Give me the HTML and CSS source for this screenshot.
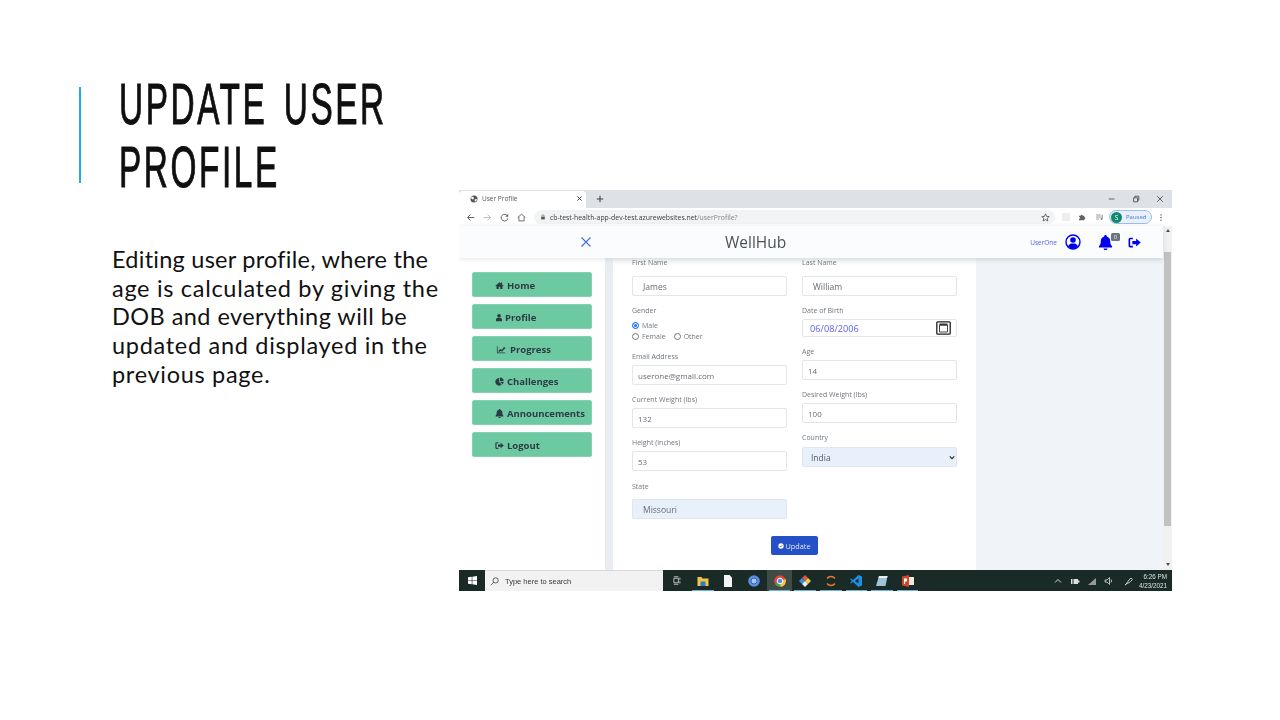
FILE: index.html
```html
<!DOCTYPE html>
<html lang="en">
<head>
<meta charset="utf-8">
<title>Update User Profile</title>
<link rel="stylesheet" href="styles.css">
</head>
<body>
<svg class="defs" width="0" height="0" aria-hidden="true">
  <symbol id="i-home" viewBox="0 0 24 24"><path d="M12 3 1 12.5l1.3 1.5L4 12.6V21h6v-6h4v6h6v-8.4l1.7 1.4 1.3-1.5L19 9V4h-3v2.4z"/></symbol>
  <symbol id="i-user" viewBox="0 0 24 24"><circle cx="12" cy="7" r="5.5"/><path d="M3 23v-4c0-3.500 2.500-6 6-6h6c3.500 0 6 2.500 6 6v4z"/></symbol>
  <symbol id="i-chart" viewBox="0 0 24 24"><path d="M1 3h2v17h20v2H1z"/><path d="m5 16 5-6 4 3 5-6-2-1h6v6l-2-2-6 8-4-3-4 4z"/></symbol>
  <symbol id="i-pie" viewBox="0 0 24 24"><path d="M11 3v10l7 7A10 10 0 1 1 11 3z"/><path d="M13 1a10 10 0 0 1 10 10H13z"/><path d="M14 13h9a10 10 0 0 1-3 6.500z"/></symbol>
  <symbol id="i-bell" viewBox="0 0 24 24"><path d="M12 0a2 2 0 0 0-2 2.300C6.500 3.200 4.500 6 4.500 9.500c0 5-1.500 7-3 8.500v2h21v-2c-1.500-1.500-3-3.500-3-8.500 0-3.500-2-6.300-5.500-7.200A2 2 0 0 0 12 0z"/><path d="M9 21.500h6a3 3 0 0 1-6 0z"/></symbol>
  <symbol id="i-out" viewBox="0 0 24 24"><path d="M9 3H4a3 3 0 0 0-3 3v12a3 3 0 0 0 3 3h5v-3H4V6h5z"/><path d="M15 4.500 23.500 12 15 19.500V15H8V9h7z"/></symbol>
</svg>

<main class="slide">
  <div class="accent"></div>
  <h1 class="title">UPDATE USER<br>PROFILE</h1>
  <p class="body-text"><span class="tight">Editing user profile, where the</span><br>age is calculated by giving the<br><span class="semi">DOB and everything will be</span><br>updated and displayed in the<br>previous page.</p>

  <section class="shot">
    <div class="tabstrip">
      <div class="tab">
        <svg class="globe" viewBox="0 0 16 16"><circle cx="8" cy="8" r="7" fill="#50555a"/><path d="M3 3l4 1 1 3-3 2-3-3zM9 9l4-1 1 2-4 4z" fill="#fff"/></svg>
        <span class="tab-title">User Profile</span>
        <svg class="tab-x" viewBox="0 0 10 10"><path d="M2 2l6 6M8 2l-6 6" stroke="#333" stroke-width="1.400"/></svg>
      </div>
      <svg class="tab-plus" viewBox="0 0 10 10"><path d="M5 1v8M1 5h8" stroke="#444" stroke-width="1.300"/></svg>
      <div class="winctl">
        <svg viewBox="0 0 10 10"><path d="M1 5h7" stroke="#444" stroke-width="1"/></svg>
        <svg viewBox="0 0 10 10"><path d="M2 3.500h5v5H2zM3.500 3.500V1.500h5v5H7" fill="none" stroke="#444" stroke-width="1"/></svg>
        <svg viewBox="0 0 10 10"><path d="M1.500 1.500l7 7M8.500 1.500l-7 7" stroke="#444" stroke-width="1"/></svg>
      </div>
    </div>

    <div class="toolbar">
      <svg class="tb-icon first" viewBox="0 0 12 12"><path d="M11 6H2M6 2 2 6l4 4" fill="none" stroke="#5f6368" stroke-width="1.300"/></svg>
      <svg class="tb-icon" viewBox="0 0 12 12"><path d="M1 6h9M6 2l4 4-4 4" fill="none" stroke="#b9bcc0" stroke-width="1.300"/></svg>
      <svg class="tb-icon" viewBox="0 0 12 12"><path d="M10 4A4.500 4.500 0 1 0 10.500 7" fill="none" stroke="#5f6368" stroke-width="1.300"/><path d="M11 1v4H7z" fill="#5f6368"/></svg>
      <svg class="tb-icon" viewBox="0 0 12 12"><path d="M1 6l5-4.500L11 6M2.500 5v5.500h7V5" fill="none" stroke="#5f6368" stroke-width="1.200"/></svg>
      <div class="omnibox">
        <svg class="lock" viewBox="0 0 10 10"><path d="M2 4.500h6V9H2z" fill="#555"/><path d="M3.300 4.500V3a1.700 1.700 0 0 1 3.400 0v1.500" fill="none" stroke="#555"/></svg>
        <span class="url">cb-test-health-app-dev-test.azurewebsites.net<span class="url-path">/userProfile?</span></span>
        <svg class="star" viewBox="0 0 12 12"><path d="M6 1.200 7.400 4.500l3.600.3-2.700 2.300.8 3.500L6 8.800l-3.100 1.800.8-3.500L1 4.800l3.600-.3z" fill="none" stroke="#444" stroke-width="1"/></svg>
      </div>
      <div class="tb-right">
        <span class="ext-box"></span>
        <svg class="tb-small" viewBox="0 0 12 12"><path d="M1.500 4h2.500a1.500 1.500 0 0 1 3 0h2.500v2.500a1.500 1.500 0 0 1 0 3V11H1.500V8.500a1.500 1.500 0 0 0 0-3z" fill="#5f6368"/></svg>
        <svg class="tb-small queue" viewBox="0 0 12 12"><path d="M1 3h7M1 6h7M1 9h4" stroke="#5f6368" stroke-width="1"/><path d="M10 3v6" stroke="#5f6368" stroke-width="1.200"/><circle cx="8.800" cy="9" r="1.300" fill="#5f6368"/></svg>
        <div class="pill"><span class="avatar">S</span><span class="paused">Paused</span></div>
        <svg class="tb-dots" viewBox="0 0 4 12"><circle cx="2" cy="2.500" r=".9" fill="#444"/><circle cx="2" cy="6" r=".9" fill="#444"/><circle cx="2" cy="9.500" r=".9" fill="#444"/></svg>
      </div>
    </div>

    <div class="viewport">
      <div class="page">
        <header class="navbar">
          <svg class="menu-x" viewBox="0 0 12 12"><path d="M1.500 1.500l9 9M10.500 1.500l-9 9" stroke="#3f6fd9" stroke-width="1.100"/></svg>
          <span class="brand">WellHub</span>
          <span class="username">UserOne</span>
          <svg class="nav-avatar" viewBox="0 0 16 16"><circle cx="8" cy="8" r="7" fill="none" stroke="#0000f0" stroke-width="1.400"/><circle cx="8" cy="6" r="2.800" fill="#0000f0"/><path d="M3 12.500c1-2.500 2.500-3 5-3s4 .5 5 3A7 7 0 0 1 8 15a7 7 0 0 1-5-2.500z" fill="#0000f0"/></svg>
          <div class="bell-wrap">
            <svg class="nav-bell"><use href="#i-bell"/></svg>
            <span class="badge">0</span>
          </div>
          <svg class="nav-out"><use href="#i-out"/></svg>
        </header>
        <div class="content">
          <nav class="sidebar">
            <a class="side-btn"><svg class="side-ic"><use href="#i-home"/></svg>Home</a>
            <a class="side-btn"><svg class="side-ic narrow"><use href="#i-user"/></svg>Profile</a>
            <a class="side-btn"><svg class="side-ic wide"><use href="#i-chart"/></svg>Progress</a>
            <a class="side-btn"><svg class="side-ic"><use href="#i-pie"/></svg>Challenges</a>
            <a class="side-btn"><svg class="side-ic"><use href="#i-bell"/></svg>Announcements</a>
            <a class="side-btn"><svg class="side-ic"><use href="#i-out"/></svg>Logout</a>
          </nav>
          <div class="gutter"></div>
          <div class="card">
            <div class="form-grid">
              <div class="col">
                <div class="field first"><div class="lbl">First Name</div><div class="ctl inset">James</div></div>
                <div class="field">
                  <div class="lbl">Gender</div>
                  <div class="radios">
                    <div class="radio-row"><span class="radio on"></span>Male</div>
                    <div class="radio-row"><span class="radio"></span><span class="radio-txt">Female</span><span class="radio"></span>Other</div>
                  </div>
                </div>
                <div class="field"><div class="lbl">Email Address</div><div class="ctl">userone@gmail.com</div></div>
                <div class="field"><div class="lbl">Current Weight (lbs)</div><div class="ctl">132</div></div>
                <div class="field"><div class="lbl">Height (inches)</div><div class="ctl">53</div></div>
                <div class="field state"><div class="lbl">State</div><div class="ctl inset filled">Missouri</div></div>
              </div>
              <div class="col">
                <div class="field first"><div class="lbl">Last Name</div><div class="ctl inset">William</div></div>
                <div class="field"><div class="lbl">Date of Birth</div>
                  <div class="ctl date"><span class="date-val">06/08/2006</span>
                    <svg class="cal" viewBox="0 0 15 14"><rect x=".8" y=".8" width="13.400" height="12.400" rx="1" fill="#fff" stroke="#222" stroke-width="1.300"/><path d="M3.500 4h8v7h-8z" fill="#fff" stroke="#444"/><path d="M3.500 2.500h8v2h-8z" fill="#333"/></svg>
                  </div>
                </div>
                <div class="field"><div class="lbl">Age</div><div class="ctl">14</div></div>
                <div class="field"><div class="lbl">Desired Weight (lbs)</div><div class="ctl">100</div></div>
                <div class="field country"><div class="lbl">Country</div>
                  <div class="ctl filled select"><span>India</span>
                    <svg class="chev" viewBox="0 0 8 6"><path d="M1 1.500l3 3 3-3" fill="none" stroke="#222" stroke-width="1.500"/></svg>
                  </div>
                </div>
              </div>
            </div>
            <div class="actions">
              <button class="update" type="button">
                <svg class="check" viewBox="0 0 10 10"><circle cx="5" cy="5" r="4.500" fill="#fff"/><path d="M2.800 5l1.600 1.600 2.800-3" fill="none" stroke="#2450c8" stroke-width="1.200"/></svg>Update
              </button>
            </div>
          </div>
          <div class="rightpane"></div>
        </div>
      </div>
      <div class="scrollbar">
        <span class="sb-up"></span>
        <span class="sb-thumb"></span>
        <span class="sb-down"></span>
      </div>
    </div>

    <footer class="taskbar">
      <div class="start">
        <svg viewBox="0 0 12 12"><path d="M0 1.700 5 1v4.600H0zM5.800.9 12 0v5.600H5.800zM0 6.400h5V11l-5-.7zM5.800 6.400H12V12l-6.200-.9z" fill="#fff"/></svg>
      </div>
      <div class="search">
        <svg class="search-ic" viewBox="0 0 12 12"><circle cx="7.500" cy="4.500" r="3.500" fill="none" stroke="#333"/><path d="M5 7l-4 4" stroke="#333"/></svg>
        <span>Type here to search</span>
      </div>
      <div class="apps">
        <div class="app taskview"><svg viewBox="0 0 12 12"><path d="M2.500 3h6v6h-6zM2.500 1h6M2.500 11h6M10.500 2v3M10.500 7v3" fill="none" stroke="#e8e8e8"/></svg></div>
        <div class="app run"><svg viewBox="0 0 12 12"><path d="M.5 2h4l1 1.500h6V11H.5z" fill="#f3c24a"/><path d="M3.500 6.500h5V11h-5z" fill="#2d7fc4"/></svg></div>
        <div class="app"><svg viewBox="0 0 12 12"><path d="M2 0h5.500L10 2.500V12H2z" fill="#f4f4f4"/></svg></div>
        <div class="app"><svg viewBox="0 0 12 12"><circle cx="6" cy="6" r="5.800" fill="#5b8fe0"/><circle cx="6" cy="6" r="3" fill="#a9c6f3" stroke="#2f62c0"/></svg></div>
        <div class="app active run"><svg viewBox="0 0 12 12"><circle cx="6" cy="6" r="5.800" fill="#e2463a"/><path d="M6 6 1 9a5.800 5.800 0 0 0 5.500 2.800z" fill="#38a552"/><path d="M6 6l5.500-2A5.800 5.800 0 0 1 6.500 11.800z" fill="#f8c533"/><circle cx="6" cy="6" r="2.800" fill="#4a8df0" stroke="#fff"/></svg></div>
        <div class="app run"><svg viewBox="0 0 12 12"><path d="M6 0l3 3-3 3-3-3z" fill="#e8503a"/><path d="M9 3l3 3-3 3-3-3z" fill="#e8d24a"/><path d="M3 3l3 3-3 3-3-3z" fill="#3a8fd8"/><path d="M6 6l3 3-3 3-3-3z" fill="#f0f0f0"/></svg></div>
        <div class="app run"><svg viewBox="0 0 12 12"><path d="M2 3.500a5 5 0 0 1 8 0M2 8.500a5 5 0 0 0 8 0" fill="none" stroke="#e07b2a" stroke-width="1.500"/></svg></div>
        <div class="app run"><svg viewBox="0 0 12 12"><path d="M8.500 0 12 1.500v9L8.500 12 3 7l-2 1.500L0 8l2-2-2-2 1-.5L3 5z" fill="#1f8fe0"/><path d="M8.500 3.500 5 6l3.500 2.500z" fill="#1b2b27"/></svg></div>
        <div class="app run"><svg viewBox="0 0 12 12"><path d="M3 1h8.500l-2 10H0z" fill="#9fc4d8"/><path d="M3 1h8.500l-.5 2H2.500z" fill="#e6eef2"/></svg></div>
        <div class="app run"><svg viewBox="0 0 12 12"><path d="M0 1.500 7 0v12l-7-1.500z" fill="#d04a2a"/><path d="M7 2h5v8H7z" fill="#f2e8e0"/><path d="M2 3.500h3v3H3V9H2z" fill="#fff"/></svg></div>
      </div>
      <div class="tray">
        <svg class="tray-ic" viewBox="0 0 10 10"><path d="M2 6.500l3-3 3 3" fill="none" stroke="#ddd"/></svg>
        <svg class="tray-ic" viewBox="0 0 10 10"><path d="M1 3h7v5H1z" fill="#ddd"/><path d="M8 4.500h1.500v2H8z" fill="#ddd"/><path d="M3 3v5" stroke="#1a2b27"/></svg>
        <svg class="tray-ic" viewBox="0 0 10 10"><path d="M1 9 9 2v7z" fill="#999"/></svg>
        <svg class="tray-ic" viewBox="0 0 10 10"><path d="M1 4h2l2.500-2.500v7L3 6H1z" fill="none" stroke="#ddd" stroke-width=".8"/><path d="M7 3.500a2.500 2.500 0 0 1 0 3" fill="none" stroke="#ddd" stroke-width=".8"/></svg>
        <svg class="tray-ic pen" viewBox="0 0 10 10"><path d="M1 9c2-1 2-3 4-5l2-2 1.500 1.500-2 2C4.500 7.500 3 7 1 9z" fill="none" stroke="#ddd" stroke-width=".9"/></svg>
        <div class="clock"><span>6:26 PM</span><span>4/23/2021</span></div>
      </div>
    </footer>
  </section>
</main>
</body>
</html>
```

FILE: styles.css
```css
* { box-sizing: border-box; }
html, body { margin: 0; padding: 0; background: #fff; }
.defs { position: absolute; }
.slide { position: relative; width: 1280px; height: 720px; overflow: hidden; background: #fff; }

.accent { position: absolute; left: 79px; top: 87px; width: 2px; height: 96px; background: #1cade4; }
.title {
  position: absolute; left: 119px; top: 72px; margin: 0; white-space: nowrap;
  font-family: "Liberation Sans", sans-serif;
  font-weight: 400; font-size: 58px; line-height: 63px; letter-spacing: 4.5px; word-spacing: 8px; color: #0f0f0f;
  transform: scaleX(.575); transform-origin: left top; -webkit-text-stroke: 1px #0f0f0f;
}
.body-text {
  position: absolute; left: 112px; top: 245px; margin: 0;
  font-family: Lato, "Open Sans", sans-serif;
  font-size: 23.5px; line-height: 28.7px; color: #111; white-space: nowrap; letter-spacing: .7px;
}
.tight { letter-spacing: .25px; }
.semi { letter-spacing: .44px; }

.shot {
  position: absolute; left: 459px; top: 190px; width: 713px; height: 401px;
  display: flex; flex-direction: column; overflow: hidden;
  font-family: "Open Sans", "Noto Sans", sans-serif; filter: blur(.3px); background: #fff;
}

/* browser chrome */
.tabstrip { height: 18px; background: #dee1e6; display: flex; align-items: flex-end; flex: none; }
.tab { width: 127px; height: 17px; background: #fff; border-radius: 4px 4px 0 0; display: flex; align-items: center; padding: 0 3px 2px 11px; }
.globe { width: 8px; height: 8px; margin-right: 4px; flex: none; }
.tab-title { font-size: 6.5px; color: #555; flex: 1; }
.tab-x { width: 7px; height: 7px; flex: none; }
.tab-plus { width: 8px; height: 8px; margin: 0 0 5px 10px; }
.winctl { margin-left: auto; display: flex; gap: 16px; height: 18px; align-items: center; padding-right: 8px; }
.winctl svg { width: 8px; height: 8px; }

.toolbar { height: 18px; background: #fff; display: flex; align-items: center; flex: none; padding-right: 7px; }
.tb-icon { width: 9px; height: 9px; margin-right: 8px; flex: none; }
.tb-icon.first { margin-left: 7px; }
.omnibox { width: 521px; height: 14px; background: #f1f3f4; border-radius: 7px; display: flex; align-items: center; padding: 0 5px 0 6px; }
.lock { width: 6px; height: 6px; margin-right: 4px; flex: none; }
.url { font-size: 6.900px; color: #3c4043; white-space: nowrap; }
.url-path { color: #80868b; }
.star { width: 9px; height: 9px; margin-left: auto; }
.tb-right { display: flex; align-items: center; margin-left: 7px; flex: 1; }
.ext-box { width: 8px; height: 8px; background: #eceef0; margin-right: 8px; }
.tb-small { width: 8px; height: 8px; margin-right: 9px; }
.tb-small.queue { width: 9px; margin-right: 5px; }
.pill { width: 43px; height: 14px; border: 1px solid #9cc0ea; border-radius: 7px; background: #e9f0fb; display: flex; align-items: center; padding-left: 1px; }
.avatar { width: 11px; height: 11px; border-radius: 50%; background: #0f8a6e; color: #fff; font-size: 6.5px; line-height: 11px; text-align: center; margin-right: 4px; }
.paused { font-size: 6px; color: #4a77c4; }
.tb-dots { width: 4px; height: 9px; margin-left: 7px; }

/* page */
.viewport { height: 344px; flex: none; display: flex; }
.page { width: 704px; display: flex; flex-direction: column; }
.navbar {
  height: 32px; flex: none; background: #fbfcfd; display: flex; align-items: center; padding: 0 22px 0 121px;
  box-shadow: 0 1px 5px rgba(60,70,90,.14); position: relative; z-index: 1;
}
.menu-x { width: 12px; height: 12px; flex: none; }
.brand { font-size: 15.500px; color: #4c5258; margin-left: 133px; }
.username { font-size: 6.500px; color: #4d5ff0; margin-left: auto; margin-right: 8px; }
.nav-avatar { width: 16px; height: 16px; flex: none; }
.bell-wrap { display: flex; margin-left: 17px; position: relative; width: 24px; }
.nav-bell { width: 15px; height: 15px; fill: #0000f0; }
.badge { position: absolute; left: 13px; top: -2px; width: 9px; height: 8px; background: #6c757d; border-radius: 1.500px; color: #fff; font-size: 5px; line-height: 8px; text-align: center; }
.nav-out { width: 13px; height: 13px; fill: #0000f0; margin-left: 6px; }

.content { flex: 1; display: flex; min-height: 0; }
.sidebar { width: 146px; flex: none; background: #fff; padding: 14px 13px 0; display: flex; flex-direction: column; gap: 7px; }
.side-btn {
  height: 25px; background: #6dc9a2; border: 1px solid #82d3b0; border-radius: 2px; display: flex; align-items: center;
  padding: 1px 0 0 22px; font-size: 9.500px; font-weight: 700; color: #2e3a44; white-space: nowrap;
}
.side-ic { width: 9px; height: 9px; fill: #2e3a44; margin-right: 3px; flex: none; }
.side-ic.narrow { width: 8px; margin-right: 2px; }
.side-ic.wide { width: 12px; margin-right: 3px; }
.gutter { width: 8px; flex: none; background: #e9edf1; }
.card { width: 363px; flex: none; background: #fff; padding: 0 19px; display: flex; flex-direction: column; background-image: linear-gradient(#eef0f2, #fff 8px); }
.form-grid { display: flex; gap: 15px; }
.col { width: 155px; flex: none; }
.field { margin-top: 10px; }
.field.first { margin-top: 0; }
.field.state { margin-top: 11px; }
.lbl { height: 8px; line-height: 10px; margin-bottom: 5px; font-size: 7px; color: #70777e; white-space: nowrap; }
.first .lbl { margin-bottom: 10px; }
.state .lbl { margin-bottom: 9px; }
.country .lbl { margin-bottom: 6px; }
.ctl {
  height: 20px; border: 1px solid #e2e5e9; border-radius: 2px; background: #fff; display: flex; align-items: center;
  padding-left: 5px; font-size: 8px; color: #666d74;
}
.ctl.inset { padding-left: 10px; font-size: 8.500px; }
.ctl.filled { background: #e8f0fc; border-color: #dfe6f0; }
.ctl.date { height: 18px; padding: 0 5px 0 7px; justify-content: space-between; }
.date-val { font-size: 9.200px; color: #5a5ff0; }
.cal { width: 15px; height: 14px; }
.ctl.select { padding: 0 1px 0 8px; justify-content: space-between; font-size: 8.500px; color: #555b62; }
.chev { width: 6px; height: 5px; }
.radios { display: flex; flex-direction: column; gap: 1px; padding: 1px 0; }
.radio-row { display: flex; align-items: center; height: 10px; font-size: 7px; color: #70777e; }
.radio { width: 7px; height: 7px; border: 1px solid #777; border-radius: 50%; background: #fff; margin-right: 3px; flex: none; }
.radio.on { border-color: #1a73e8; background: #1a73e8; box-shadow: inset 0 0 0 1px #fff; }
.radio-txt { margin-right: 8px; }
.actions { display: flex; justify-content: center; margin-top: 17px; }
.update {
  width: 47px; height: 19px; background: #2450c8; border: 0; border-radius: 2px; color: #dfe6f8; display: flex; align-items: center;
  justify-content: center; font: 7.300px "Open Sans", sans-serif; padding: 0;
}
.check { width: 6px; height: 6px; margin-right: 1px; }
.rightpane { flex: 1; background: #f0f3f7; box-shadow: inset 0 6px 6px -6px rgba(60,70,90,.12); }
.scrollbar { width: 9px; flex: none; background: #f1f1f1; display: flex; flex-direction: column; align-items: center; position: relative; }
.sb-up { width: 0; height: 0; margin-top: 3px; border: 2.500px solid transparent; border-bottom: 3px solid #505050; border-top: 0; }
.sb-thumb { width: 7px; height: 274px; background: #c1c1c1; margin-top: 20px; }
.sb-down { width: 0; height: 0; margin-top: 37px; border: 2.500px solid transparent; border-top: 3px solid #505050; border-bottom: 0; }

/* taskbar */
.taskbar { height: 21px; flex: none; background: #1a2b27; display: flex; align-items: stretch; }
.start { width: 26px; display: flex; align-items: center; justify-content: center; flex: none; }
.start svg { width: 9px; height: 9px; }
.search { width: 178px; flex: none; background: #f2f2f2; border-top: 1px solid #d9d9d9; display: flex; align-items: center; padding-left: 5px; font-size: 7.500px; font-family: "Liberation Sans", sans-serif; color: #3a3a3a; }
.search-ic { width: 9px; height: 9px; margin-right: 6px; }
.apps { display: flex; flex: none; }
.app { width: 25.600px; display: flex; align-items: center; justify-content: center; position: relative; }
.taskview { width: 27px; }
.app svg { width: 12px; height: 12px; }
.taskview svg { width: 9px; height: 9px; }
.app.active { background: #3e4c48; }
.app.run::after { content: ""; position: absolute; left: 2px; right: 2px; bottom: 0; height: 1px; background: #6cb4e8; }
.tray { flex: 1; display: flex; align-items: center; justify-content: flex-end; padding-right: 5px; }
.tray-ic { width: 10px; height: 10px; margin-right: 7px; flex: none; }
.tray-ic.pen { margin-left: 3px; margin-right: 5px; }
.clock { display: flex; flex-direction: column; align-items: flex-end; font-size: 6.300px; line-height: 9px; color: #dfe4e2; font-family: "Liberation Sans", sans-serif; width: 28px; }
```
